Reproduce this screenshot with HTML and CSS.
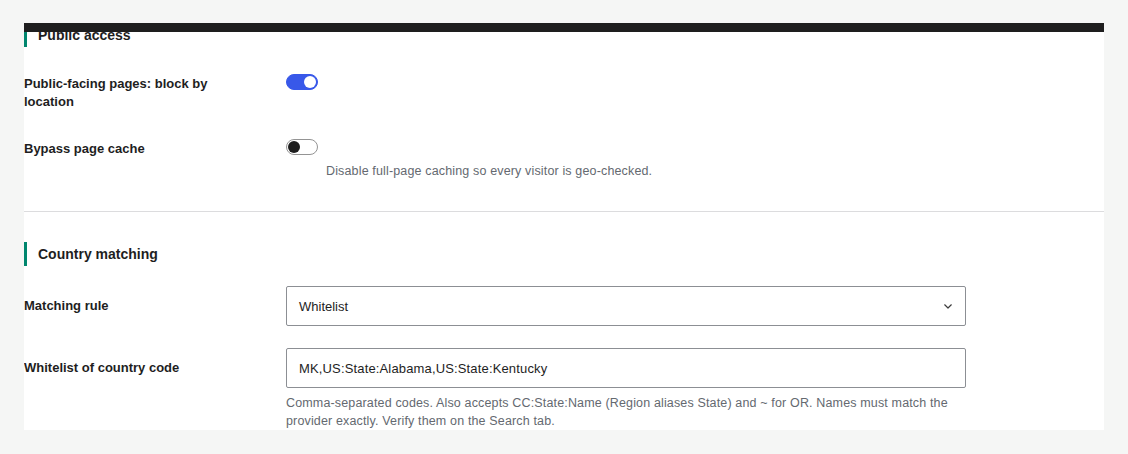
FILE: index.html
```html
<!DOCTYPE html>
<html lang="en">
<head>
<meta charset="utf-8">
<title>Geo settings</title>
<link rel="stylesheet" href="styles.css">
</head>
<body>
<div class="panel">
  <div class="topbar"></div>
  <section class="section">
    <h2 class="heading">Public access</h2>
    <div class="row row-first">
      <div class="label label-toggle">Public-facing pages: block by location</div>
      <div class="control">
        <span class="toggle on"><span class="knob"></span></span>
      </div>
    </div>
    <div class="row row-second">
      <div class="label label-toggle">Bypass page cache</div>
      <div class="control">
        <span class="toggle"><span class="knob"></span></span>
        <p class="desc desc-toggle">Disable full-page caching so every visitor is geo-checked.</p>
      </div>
    </div>
  </section>
  <hr class="sep">
  <section class="section">
    <h2 class="heading">Country matching</h2>
    <div class="row row-select">
      <div class="label label-field">Matching rule</div>
      <div class="control">
        <div class="field select">
          <span>Whitelist</span>
          <svg class="chev" width="8" height="5" viewBox="0 0 8 5"><polyline points="0.7,0.8 4,4 7.3,0.8" fill="none" stroke="#3c3c3c" stroke-width="1.2" stroke-linecap="round" stroke-linejoin="round"/></svg>
        </div>
      </div>
    </div>
    <div class="row row-input">
      <div class="label label-field">Whitelist of country code</div>
      <div class="control">
        <div class="field input">MK,US:State:Alabama,US:State:Kentucky</div>
        <p class="desc desc-field">Comma-separated codes. Also accepts CC:State:Name (Region aliases State) and ~ for OR. Names must match the provider exactly. Verify them on the Search tab.</p>
      </div>
    </div>
  </section>
</div>
</body>
</html>
```

FILE: styles.css
```css
html, body {
  margin: 0;
  padding: 0;
  background: #f5f6f5;
}
body {
  font-family: "Liberation Sans", Arial, sans-serif;
  color: #1e1e1e;
  padding: 23px 24px 24px 24px;
  height: 454px;
  box-sizing: border-box;
  overflow: hidden;
}
.panel {
  position: relative;
  background: #ffffff;
  width: 1080px;
  overflow: hidden;
}
.topbar {
  position: absolute;
  top: 0;
  left: 0;
  right: 0;
  height: 9px;
  background: #1e1e1e;
  z-index: 2;
}
.section {
  display: flex;
  flex-direction: column;
}
.heading {
  margin: 0;
  height: 24px;
  line-height: 24px;
  border-left: 3px solid #00866e;
  padding-left: 11px;
  font-size: 14px;
  font-weight: 700;
  color: #1e1e1e;
}
.row {
  display: grid;
  grid-template-columns: 200px 680px;
  column-gap: 62px;
  align-items: start;
}
.row-first { margin-top: 27px; }
.row-second { margin-top: 28px; }
.row-select { margin-top: 20px; }
.row-input { margin-top: 22px; }
.label {
  font-size: 13px;
  font-weight: 700;
  line-height: 18px;
  color: #1e1e1e;
}
.label-toggle {
  margin-top: 1px;
}
.label-field {
  padding-top: 11px;
}
.control {
  display: flex;
  flex-direction: column;
  align-items: flex-start;
}
.toggle {
  position: relative;
  display: block;
  width: 32px;
  height: 16px;
  box-sizing: border-box;
  border-radius: 8px;
  border: 1px solid #949494;
  background: #ffffff;
}
.toggle .knob {
  position: absolute;
  top: 1px;
  left: 1px;
  width: 12px;
  height: 12px;
  border-radius: 50%;
  background: #1e1e1e;
}
.toggle.on {
  background: #3858e9;
  border-color: #3858e9;
}
.toggle.on .knob {
  left: auto;
  right: 1px;
  background: #ffffff;
}
.desc {
  margin: 0;
  font-size: 12.5px;
  letter-spacing: 0.15px;
  line-height: 18px;
  color: #646970;
}
.desc-toggle {
  margin-top: 7px;
  padding-left: 40px;
}
.desc-field {
  margin-top: 6px;
  width: 680px;
}
.field {
  box-sizing: border-box;
  width: 680px;
  height: 40px;
  border: 1px solid #8c8f94;
  border-radius: 2px;
  padding: 0 12px;
  display: flex;
  align-items: center;
  font-size: 13px;
  color: #1e1e1e;
}
.input {
  letter-spacing: 0.15px;
}
.select {
  justify-content: space-between;
}
.chev {
  display: block;
  margin-right: 1px;
}
.sep {
  margin: 31px 0 0 0;
  border: 0;
  height: 1px;
  background: #dcdcde;
}
.sep + .section .heading {
  margin-top: 30px;
}
```
